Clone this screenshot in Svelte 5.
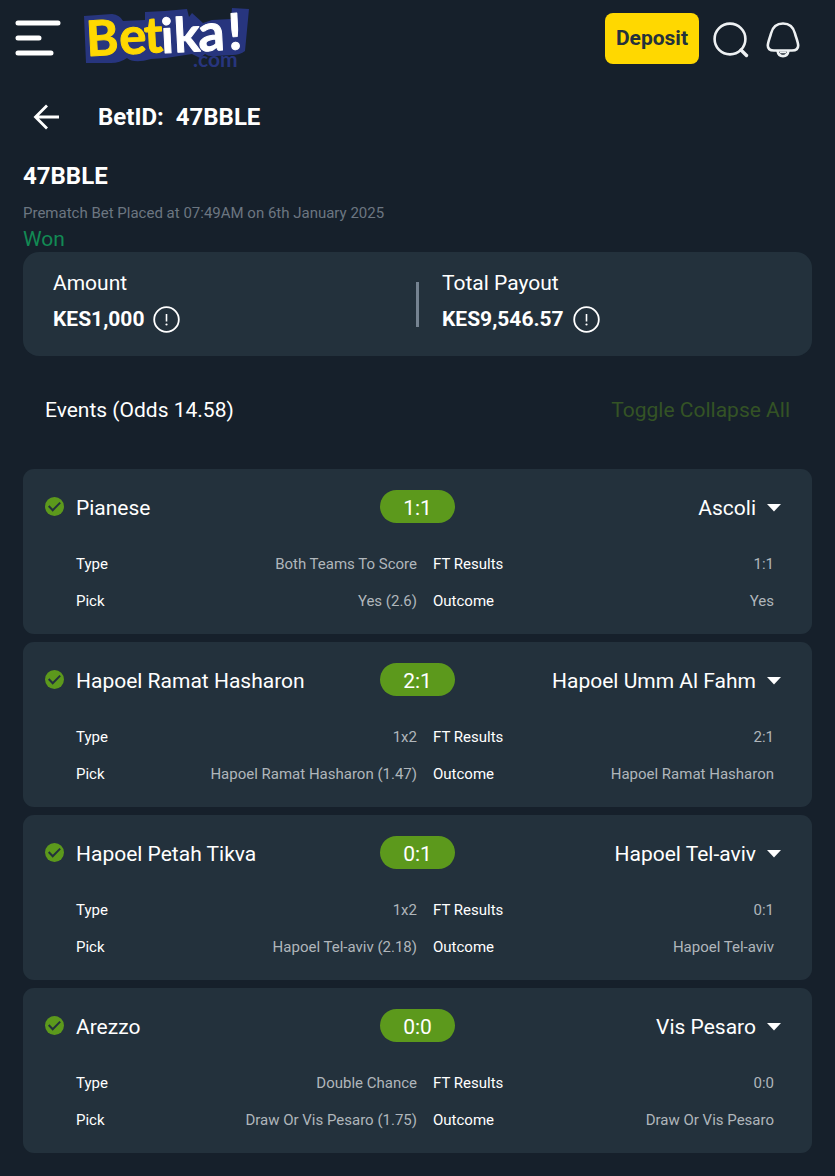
<script lang="ts">
    type Match = {
        home: string;
        away: string;
        score: string;
        market: string;
        pick: string;
        outcome: string;
        open: boolean;
    };

    const betId = '47BBLE';

    let events: Match[] = $state([
        { home: 'Pianese', away: 'Ascoli', score: '1:1', market: 'Both Teams To Score', pick: 'Yes (2.6)', outcome: 'Yes', open: true },
        { home: 'Hapoel Ramat Hasharon', away: 'Hapoel Umm Al Fahm', score: '2:1', market: '1x2', pick: 'Hapoel Ramat Hasharon (1.47)', outcome: 'Hapoel Ramat Hasharon', open: true },
        { home: 'Hapoel Petah Tikva', away: 'Hapoel Tel-aviv', score: '0:1', market: '1x2', pick: 'Hapoel Tel-aviv (2.18)', outcome: 'Hapoel Tel-aviv', open: true },
        { home: 'Arezzo', away: 'Vis Pesaro', score: '0:0', market: 'Double Chance', pick: 'Draw Or Vis Pesaro (1.75)', outcome: 'Draw Or Vis Pesaro', open: true }
    ]);

    function toggleAll() {
        const open = !events.some((e) => e.open);
        events.forEach((e) => (e.open = open));
    }
</script>

{#snippet info(label: string)}
    <button class="icon-btn" aria-label={label}>
        <svg width="27" height="27" viewBox="0 0 27 27" fill="none" stroke="#fff">
            <circle cx="13.5" cy="13.5" r="12.3" stroke-width="1.8" />
            <path d="M13.5 8v7.5" stroke-width="1.6" />
            <circle cx="13.5" cy="18.5" r="1.1" fill="#fff" stroke="none" />
        </svg>
    </button>
{/snippet}

<header>
    <button class="icon-btn" aria-label="Menu">
        <svg width="46" height="36" viewBox="0 0 46 36" stroke="#fff" stroke-width="5" stroke-linecap="round">
            <path d="M3 3h40M3 18h21M3 33h33" />
        </svg>
    </button>
    <a class="logo" href="/" aria-label="Betika.com">
        <svg width="166" height="64" viewBox="0 0 166 64">
            <path
                fill="#27357e"
                d="M0 10 28 8Q36 9 39 15L61 14V6L81 5 103 3 105 11 108 7 119 17 128 14 147 13 148 2 165 3 161 45Q156 49 148 49L132 50Q125 51 121 48L116 52 108 48 82 52 67 53Q50 58 43 52 36 57 27 57L2 57Z"
            />
            <g class="letters" transform="rotate(-3 6 50)">
                <text y="50" font-size="49" fill="#ffd800" stroke="#ffd800">
                    <tspan x="3">B</tspan><tspan x="36" font-size="51">e</tspan><tspan x="61" font-size="50">t</tspan>
                </text>
                <text y="51" font-size="48" fill="#fff" stroke="#fff">
                    <tspan x="78">i</tspan><tspan x="91">k</tspan><tspan x="115" font-size="52">a</tspan><tspan x="145" font-size="50">!</tspan>
                </text>
            </g>
            <text class="com" x="109" y="61">.com</text>
        </svg>
    </a>
    <button class="deposit">Deposit</button>
    <button class="icon-btn search" aria-label="Search">
        <svg width="36" height="36" viewBox="0 0 36 36" fill="none" stroke="#eef1f3" stroke-width="2.6" stroke-linecap="round">
            <circle cx="17" cy="17" r="15.4" />
            <path d="m28 28 5.5 5.5" stroke-width="3.4" />
        </svg>
    </button>
    <button class="icon-btn" aria-label="Notifications">
        <svg width="34" height="36" viewBox="0 0 34 36" fill="none" stroke="#eef1f3" stroke-width="2.6" stroke-linejoin="round">
            <path d="M17 1.5C10 1.5 6.5 5.500 5 11.500 4 15.500 2 20 1.800 23.500 1.800 27.500 4 28.500 8 28.500H26c4 0 6.200-1 6.200-5C32 20 30 15.500 29 11.500 27.500 5.500 24 1.500 17 1.500Z" />
            <path d="M11.500 28.500c.5 3.800 2.600 5.600 5.500 5.600s5-1.800 5.500-5.600" />
            <path d="M14 30.500h6" stroke-width="1.6" />
        </svg>
    </button>
</header>

<main>
    <div class="title-bar">
        <button class="icon-btn" aria-label="Back">
            <svg width="26" height="26" viewBox="0 0 26 26" fill="none" stroke="#fff" stroke-width="2.8">
                <path d="M26 13H2.500M14 1.500 2.500 13 14 24.500" />
            </svg>
        </button>
        <h1>BetID:&nbsp; {betId}</h1>
    </div>

    <h2>{betId}</h2>
    <p class="placed">Prematch Bet Placed at 07:49AM on 6th January 2025</p>
    <p class="status">Won</p>

    <section class="summary">
        <div class="sum">
            <span>Amount</span>
            <div class="value"><strong>KES1,000</strong>{@render info('Amount details')}</div>
        </div>
        <div class="divider"></div>
        <div class="sum">
            <span>Total Payout</span>
            <div class="value"><strong>KES9,546.57</strong>{@render info('Payout details')}</div>
        </div>
    </section>

    <div class="events-bar">
        <span>Events (Odds 14.58)</span>
        <button class="toggle" onclick={toggleAll}>Toggle Collapse All</button>
    </div>

    <div class="events">
        {#each events as e}
            <article>
                <div class="teams">
                    <div class="home">
                        <svg width="19" height="19" viewBox="0 0 19 19" fill="none">
                            <circle cx="9.500" cy="9.500" r="9.500" fill="#5c991c" />
                            <path d="m3.700 9 4 4.200 7.500-7.600" stroke="#23313c" stroke-width="2" />
                        </svg>
                        <span>{e.home}</span>
                    </div>
                    <span class="score">{e.score}</span>
                    <div class="away">
                        <span>{e.away}</span>
                        <button class="icon-btn" aria-label="Toggle {e.home} v {e.away}" aria-expanded={e.open} onclick={() => (e.open = !e.open)}>
                            <svg width="14" height="8" viewBox="0 0 14 8"><path d="M0 0h14L7 7.500Z" fill="#fff" /></svg>
                        </button>
                    </div>
                </div>
                {#if e.open}
                    <dl>
                        <div><dt>Type</dt><dd>{e.market}</dd></div>
                        <div><dt>FT Results</dt><dd>{e.score}</dd></div>
                        <div><dt>Pick</dt><dd>{e.pick}</dd></div>
                        <div><dt>Outcome</dt><dd>{e.outcome}</dd></div>
                    </dl>
                {/if}
            </article>
        {/each}
    </div>
</main>

<style>
    :global(body) {
        margin: 0;
        background: #16202b;
        color: #fff;
        font-family: Roboto, sans-serif;
        font-size: 21px;
        line-height: 26px;
    }

    h1, h2, p, dl, dd {
        margin: 0;
    }

    button {
        border: 0;
        padding: 0;
        background: none;
        color: inherit;
        font: inherit;
        cursor: pointer;
    }

    svg {
        display: block;
        overflow: visible;
    }

    .icon-btn {
        flex: none;
    }

    header {
        display: flex;
        align-items: center;
        height: 76px;
        padding: 0 35px 0 15px;
    }

    .logo {
        margin: 0 auto 0 23px;
    }

    .letters {
        font-family: Lato, sans-serif;
        font-weight: 700;
        stroke-width: 1;
        stroke-linejoin: round;
    }

    .com {
        font-family: Lato, sans-serif;
        font-size: 21px;
        font-weight: 700;
        fill: #27357e;
    }

    .deposit {
        height: 51px;
        padding: 0 11px;
        border-radius: 8px;
        background: #ffd800;
        color: #24313c;
        font-weight: 700;
    }

    .search {
        margin: 4px 17px 0 14px;
    }

    .search + .icon-btn {
        margin-top: 4px;
    }

    main {
        padding: 0 23px 23px;
    }

    .title-bar {
        display: flex;
        align-items: center;
        gap: 39px;
        height: 82px;
        padding-left: 10px;
    }

    h1, h2 {
        font-size: 24px;
        line-height: 36px;
        font-weight: 700;
    }

    .placed {
        margin-top: 7px;
        color: #6c7681;
        font-size: 15px;
        line-height: 24px;
    }

    .status {
        padding-top: 1px;
        color: #128a54;
    }

    .summary {
        display: flex;
        align-items: center;
        gap: 23px;
        height: 104px;
        padding: 0 30px;
        border-radius: 16px;
        background: #23313c;
    }

    .sum {
        flex: 1;
        display: flex;
        flex-direction: column;
        gap: 10px;
        padding-bottom: 6px;
    }

    .value {
        display: flex;
        align-items: center;
        gap: 9px;
    }

    .divider {
        width: 3px;
        height: 45px;
        background: #758391;
    }

    .events-bar {
        display: flex;
        align-items: center;
        justify-content: space-between;
        height: 107px;
        padding: 0 22px 6px;
    }

    .toggle {
        color: #345325;
    }

    .events {
        display: grid;
        gap: 8px;
    }

    article {
        padding: 21px 22px 14px;
        border-radius: 11px;
        background: #23313c;
    }

    .teams {
        display: grid;
        grid-template-columns: 1fr auto 1fr;
        align-items: center;
    }

    .home, .away {
        display: flex;
        align-items: center;
    }

    .home span, .away {
        padding-top: 2px;
    }

    .home {
        gap: 12px;
    }

    .away {
        justify-content: flex-end;
        gap: 11px;
        padding-right: 9px;
    }

    .score {
        box-sizing: border-box;
        width: 75px;
        height: 33px;
        padding-top: 1px;
        border-radius: 17px;
        background: #5c991c;
        line-height: 34px;
        text-align: center;
    }

    dl {
        display: grid;
        grid-template-columns: 1fr 1fr;
        column-gap: 16px;
        padding: 23px 16px 0 31px;
        font-size: 15px;
        line-height: 37px;
    }

    dl div {
        display: flex;
        justify-content: space-between;
    }

    dd {
        color: #b0b6bb;
    }
</style>
